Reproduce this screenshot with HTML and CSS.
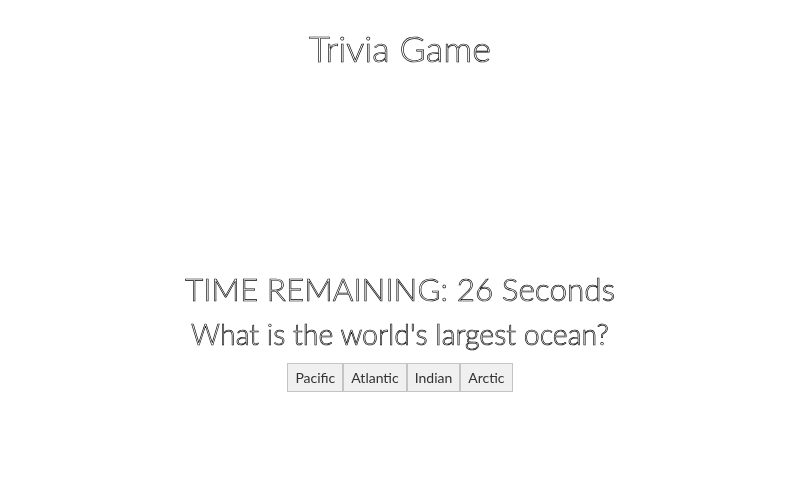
FILE: index.html
```html
<!DOCTYPE html>
<html>
<head>
<meta charset="utf-8">
<link rel="stylesheet" href="styles.css">
</head>
<body>
<h1 class="title">Trivia Game</h1>
<main class="game">
  <h2 class="timer">TIME REMAINING: 26 Seconds</h2>
  <h3 class="question">What is the world's largest ocean?</h3>
  <div class="answers">
    <button class="answer">Pacific</button><button class="answer">Atlantic</button><button class="answer">Indian</button><button class="answer">Arctic</button>
  </div>
</main>
</body>
</html>
```
FILE: styles.css
```css
html, body {
  margin: 0;
  background: #fff;
}
body {
  font-family: Lato, "Open Sans", sans-serif;
  font-weight: 300;
  color: #fff;
  -webkit-text-stroke: 0.65px #000;
  text-align: center;
}
.title, .timer, .question, .answers {
  will-change: transform;
  background: #fff;
}
.title {
  font-size: 36px;
  font-weight: 300;
  margin: 0 auto;
  padding-top: 26px;
  line-height: 44px;
}
.game {
  padding-top: 197px;
}
.timer {
  font-size: 31.5px;
  font-weight: 300;
  margin: 0;
  line-height: 44px;
}
.question {
  font-size: 28.5px;
  font-weight: 300;
  margin: 2px 0 0;
  line-height: 42px;
}
.answers {
  display: flex;
  justify-content: center;
  margin-top: 8px;
}
.answer {
  font-family: Lato, sans-serif;
  font-weight: 400;
  font-size: 14px;
  color: #333;
  -webkit-text-stroke: 0;
  background: #f0f0f0;
  border: 1px solid #c4c4c4;
  height: 29px;
  padding: 0 7px;
  margin: 0;
}
```
